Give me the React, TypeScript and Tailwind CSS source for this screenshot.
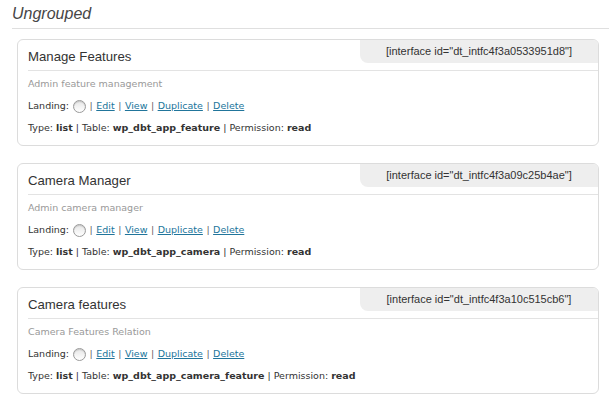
import React from 'react';

type Item = {
  title: string;
  id: string;
  description: string;
  table: string;
};

const items: Item[] = [
  {
    title: 'Manage Features',
    id: 'dt_intfc4f3a0533951d8',
    description: 'Admin feature management',
    table: 'wp_dbt_app_feature',
  },
  {
    title: 'Camera Manager',
    id: 'dt_intfc4f3a09c25b4ae',
    description: 'Admin camera manager',
    table: 'wp_dbt_app_camera',
  },
  {
    title: 'Camera features',
    id: 'dt_intfc4f3a10c515cb6',
    description: 'Camera Features Relation',
    table: 'wp_dbt_app_camera_feature',
  },
];

const Sep = () => <span className="mx-[3.5px] text-[#666]">|</span>;

const InterfaceCard: React.FC<{ item: Item }> = ({ item }) => {
  return (
    <div className="relative mb-[17px] mr-[10px] ml-[17px] rounded-[6px] border border-[#dcdcdc] bg-white">
      <div className="absolute top-0 right-0 flex h-[23px] w-[238px] items-center justify-center rounded-tr-[5px] rounded-bl-[8px] bg-[#eeeeee] pb-[1px] font-['Liberation_Sans',Arial,sans-serif] text-[11px] text-[#333]">
        [interface id="{item.id}"]
      </div>
      <h3 className="ml-[10px] border-b border-[#e3e3e3] pt-[8px] pb-[4px] font-['Liberation_Sans',Arial,sans-serif] text-[13.2px] leading-[18px] text-[#333]">
        {item.title}
      </h3>
      <div className="px-[10px] pt-[2px] pb-[6px] font-['DejaVu_Sans',Verdana,sans-serif] text-[9.5px] leading-[22px] text-[#333]">
        <div className="text-[#999]">{item.description}</div>
        <div className="flex items-center">
          <span>Landing:</span>
          <span className="ml-[4px] inline-block h-[13px] w-[13px] rounded-full border border-[#9a9a9a] bg-gradient-to-b from-[#e6e6e6] to-[#ffffff] shadow-[inset_0_1px_1px_rgba(0,0,0,0.15)]" />
          <Sep />
          <a href="#" className="text-[#21759b] underline">Edit</a>
          <Sep />
          <a href="#" className="text-[#21759b] underline">View</a>
          <Sep />
          <a href="#" className="text-[#21759b] underline">Duplicate</a>
          <Sep />
          <a href="#" className="text-[#21759b] underline">Delete</a>
        </div>
        <div>
          Type: <b>list</b> | Table: <b>{item.table}</b> | Permission: <b>read</b>
        </div>
      </div>
    </div>
  );
};

export default function App() {
  return (
    <div className="min-h-screen bg-white">
      <h2 className="ml-[12px] border-b border-[#dfdfdf] pt-[4px] pb-[4px] font-['Liberation_Sans',Arial,sans-serif] text-[16px] leading-[20px] text-[#464646] italic">
        Ungrouped
      </h2>
      <div className="mt-[10px]">
        {items.map((item) => (
          <InterfaceCard key={item.id} item={item} />
        ))}
      </div>
    </div>
  );
}
